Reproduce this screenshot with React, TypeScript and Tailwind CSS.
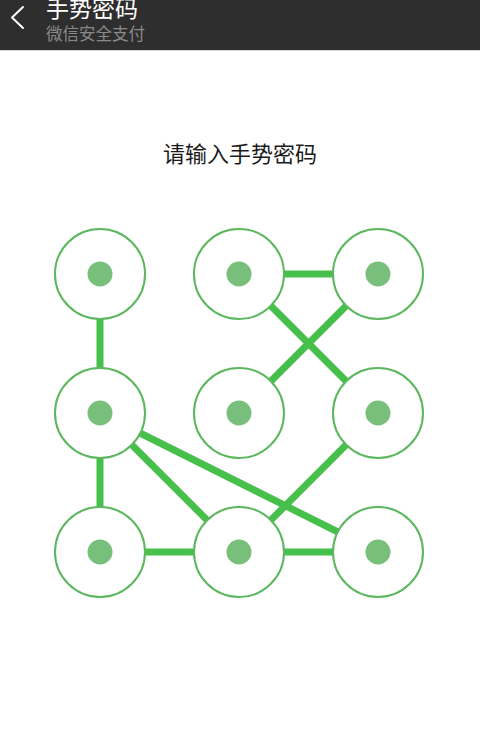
const cols = [100, 239, 378];
const rows = [54, 193, 332];

// pattern segments, [col, row] pairs
const segments: [number, number, number, number][] = [
  [0, 0, 0, 1],
  [1, 0, 2, 0],
  [1, 0, 2, 1],
  [2, 0, 1, 1],
  [0, 1, 0, 2],
  [0, 1, 1, 2],
  [0, 1, 2, 2],
  [2, 1, 1, 2],
  [0, 2, 1, 2],
  [1, 2, 2, 2],
];

function PatternPad() {
  return (
    <svg width={480} height={390} viewBox="0 0 480 390" className="block">
      {segments.map(([c1, r1, c2, r2], i) => (
        <line
          key={i}
          x1={cols[c1]}
          y1={rows[r1]}
          x2={cols[c2]}
          y2={rows[r2]}
          stroke="#46c04b"
          strokeWidth={7}
        />
      ))}
      {rows.map((y) =>
        cols.map((x) => (
          <g key={`${x}-${y}`}>
            <circle cx={x} cy={y} r={45} fill="#ffffff" stroke="#5cb75f" strokeWidth={2} />
            <circle cx={x} cy={y} r={12.5} fill="#79bf7c" />
          </g>
        ))
      )}
    </svg>
  );
}

function BackArrow() {
  return (
    <svg width={34} height={36} viewBox="0 0 34 36" className="shrink-0">
      <polyline
        points="23,7 12,17.5 23,28"
        fill="none"
        stroke="#ffffff"
        strokeWidth={2}
        strokeLinecap="round"
        strokeLinejoin="round"
      />
    </svg>
  );
}

export default function App() {
  return (
    <div
      className="w-[480px] h-[741px] bg-white overflow-hidden"
      style={{ fontFamily: '"Noto Sans CJK SC", "Noto Sans", sans-serif' }}
    >
      {/* Title bar */}
      <div className="h-[51px] bg-[#2e2e2e] border-b border-[#d9d9d9] flex items-start overflow-hidden">
        <BackArrow />
        <div className="ml-[12px] -mt-[7px]">
          <div className="text-[23px] leading-[28px] text-white">手势密码</div>
          <div className="text-[16.5px] leading-[24px] text-[#8a8a8a]">微信安全支付</div>
        </div>
      </div>

      <div className="pt-[86px] flex flex-col items-center">
        <div className="text-[22px] leading-[30px] text-[#1a1a1a]">请输入手势密码</div>
        <div className="mt-[53px]">
          <PatternPad />
        </div>
      </div>
    </div>
  );
}
